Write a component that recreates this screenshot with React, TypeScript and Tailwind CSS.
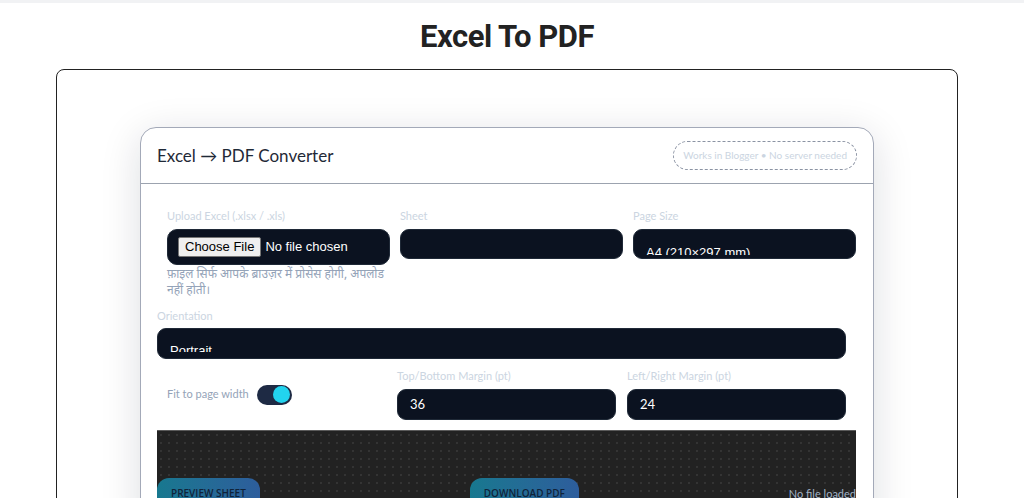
const labelCls = "block text-[11px] leading-[14px] text-[#cbd5e1] mb-[6px]";
const fieldCls = "rounded-[9px] bg-[#0b1220] border border-[#1f2937] overflow-hidden px-[12px] text-[13px] text-white";
const btnCls =
  "rounded-[12px] bg-gradient-to-r from-[#17788f] to-[#2d5d9c] px-[14px] pt-[8px] pb-[10px] text-[10px] font-semibold text-[#10233a] font-['Open_Sans',sans-serif]";

function ClippedSelect({ value, className, top, clip }: { value: string; className: string; top: string; clip: string }) {
  return (
    <div className={`${fieldCls} ${className}`}>
      <div className={`${top} ${clip} overflow-hidden leading-[16px] font-['Liberation_Sans',sans-serif]`}>{value}</div>
    </div>
  );
}

export default function App() {
  return (
    <div className="min-h-screen bg-white font-['Lato','Noto_Sans',sans-serif]">
      <div className="h-[3px] bg-[#f1f2f4]" />

      <h1 className="ml-[56px] mt-[17px] w-[902px] text-center text-[31px] leading-[34px] font-bold tracking-[-0.5px] text-[#222] font-['Roboto',sans-serif]">
        Excel To PDF
      </h1>

      <div className="ml-[56px] mt-[15px] w-[902px] rounded-lg border border-[#222] pt-[57px] pb-[40px]">
        <div className="mx-auto w-[734px] rounded-2xl border border-[#a3a9b8] bg-white shadow-[0_8px_40px_rgba(15,23,42,0.14)]">
          {/* header */}
          <div className="flex h-[56px] items-center justify-between border-b border-[#9ca3af] px-[16px]">
            <h2 className="text-[17px] text-[#1f2937]">Excel → PDF Converter</h2>
            <span className="rounded-full border border-dashed border-[#8b93a3] px-[9px] py-[7px] text-[10px] leading-[13px] text-[#cbd5e1]">
              Works in Blogger • No server needed
            </span>
          </div>

          {/* body */}
          <div className="px-[16px] pt-[25px]">
            <div className="grid grid-cols-[223px_223px_223px] gap-x-[10px] pl-[10px]">
              <div>
                <label className={labelCls}>Upload Excel (.xlsx / .xls)</label>
                <input
                  type="file"
                  className="block w-full rounded-[10px] border border-[#1f2937] bg-[#0b1220] px-[10px] py-[7px] text-[13px] leading-[16px] text-white font-['Liberation_Sans',sans-serif] file:mr-[4px] file:rounded-[2px] file:border file:border-solid file:border-[#767676] file:bg-[#efefef] file:px-[6px] file:py-[1px] file:text-[13px] file:text-black"
                />
                <p className="mt-[1px] text-[12px] leading-[16px] text-[#94a3b8] font-['Noto_Sans','Noto_Sans_Devanagari',sans-serif]">
                  फ़ाइल सिर्फ आपके ब्राउज़र में प्रोसेस होगी, अपलोड नहीं होती।
                </p>
              </div>
              <div>
                <label className={labelCls}>Sheet</label>
                <div className={`${fieldCls} h-[30px]`} />
              </div>
              <div>
                <label className={labelCls}>Page Size</label>
                <ClippedSelect value="A4 (210×297 mm)" className="h-[30px]" top="mt-[15px]" clip="h-[10px]" />
              </div>
            </div>

            <div className="mt-[11px] w-[689px]">
              <label className="block text-[11px] leading-[14px] text-[#cbd5e1] mb-[5px]">Orientation</label>
              <ClippedSelect value="Portrait" className="h-[31px]" top="mt-[14px]" clip="h-[9px]" />
            </div>

            <div className="mt-[10px] grid grid-cols-[229px_219px_219px] gap-x-[11px]">
              <div className="flex items-center gap-[8px] self-center pl-[10px]">
                <span className="text-[11px] text-[#94a3b8]">Fit to page width</span>
                <span className="flex h-[20px] w-[35px] items-center justify-end rounded-full bg-[#1e2a44] pr-[2px]">
                  <span className="h-[17px] w-[17px] rounded-full bg-[#22d3ee]" />
                </span>
              </div>
              <div>
                <label className={labelCls}>Top/Bottom Margin (pt)</label>
                <div className={`${fieldCls} h-[31px] flex items-center`}>36</div>
              </div>
              <div>
                <label className={labelCls}>Left/Right Margin (pt)</label>
                <div className={`${fieldCls} h-[31px] flex items-center`}>24</div>
              </div>
            </div>

            <div className="mt-[10px] w-[699px] border-t border-[#5a5a5a] bg-[#222] bg-[radial-gradient(circle,#343434_0.7px,transparent_1px)] bg-[length:8px_8px] pt-[47px] pb-[20px]">
              <div className="flex items-start justify-between">
                <button className={btnCls}>PREVIEW SHEET</button>
                <button className={btnCls}>DOWNLOAD PDF</button>
                <span className="pt-[8px] text-[11px] text-[#a3b3c6]">No file loaded</span>
              </div>
            </div>
          </div>
        </div>
      </div>
    </div>
  );
}
